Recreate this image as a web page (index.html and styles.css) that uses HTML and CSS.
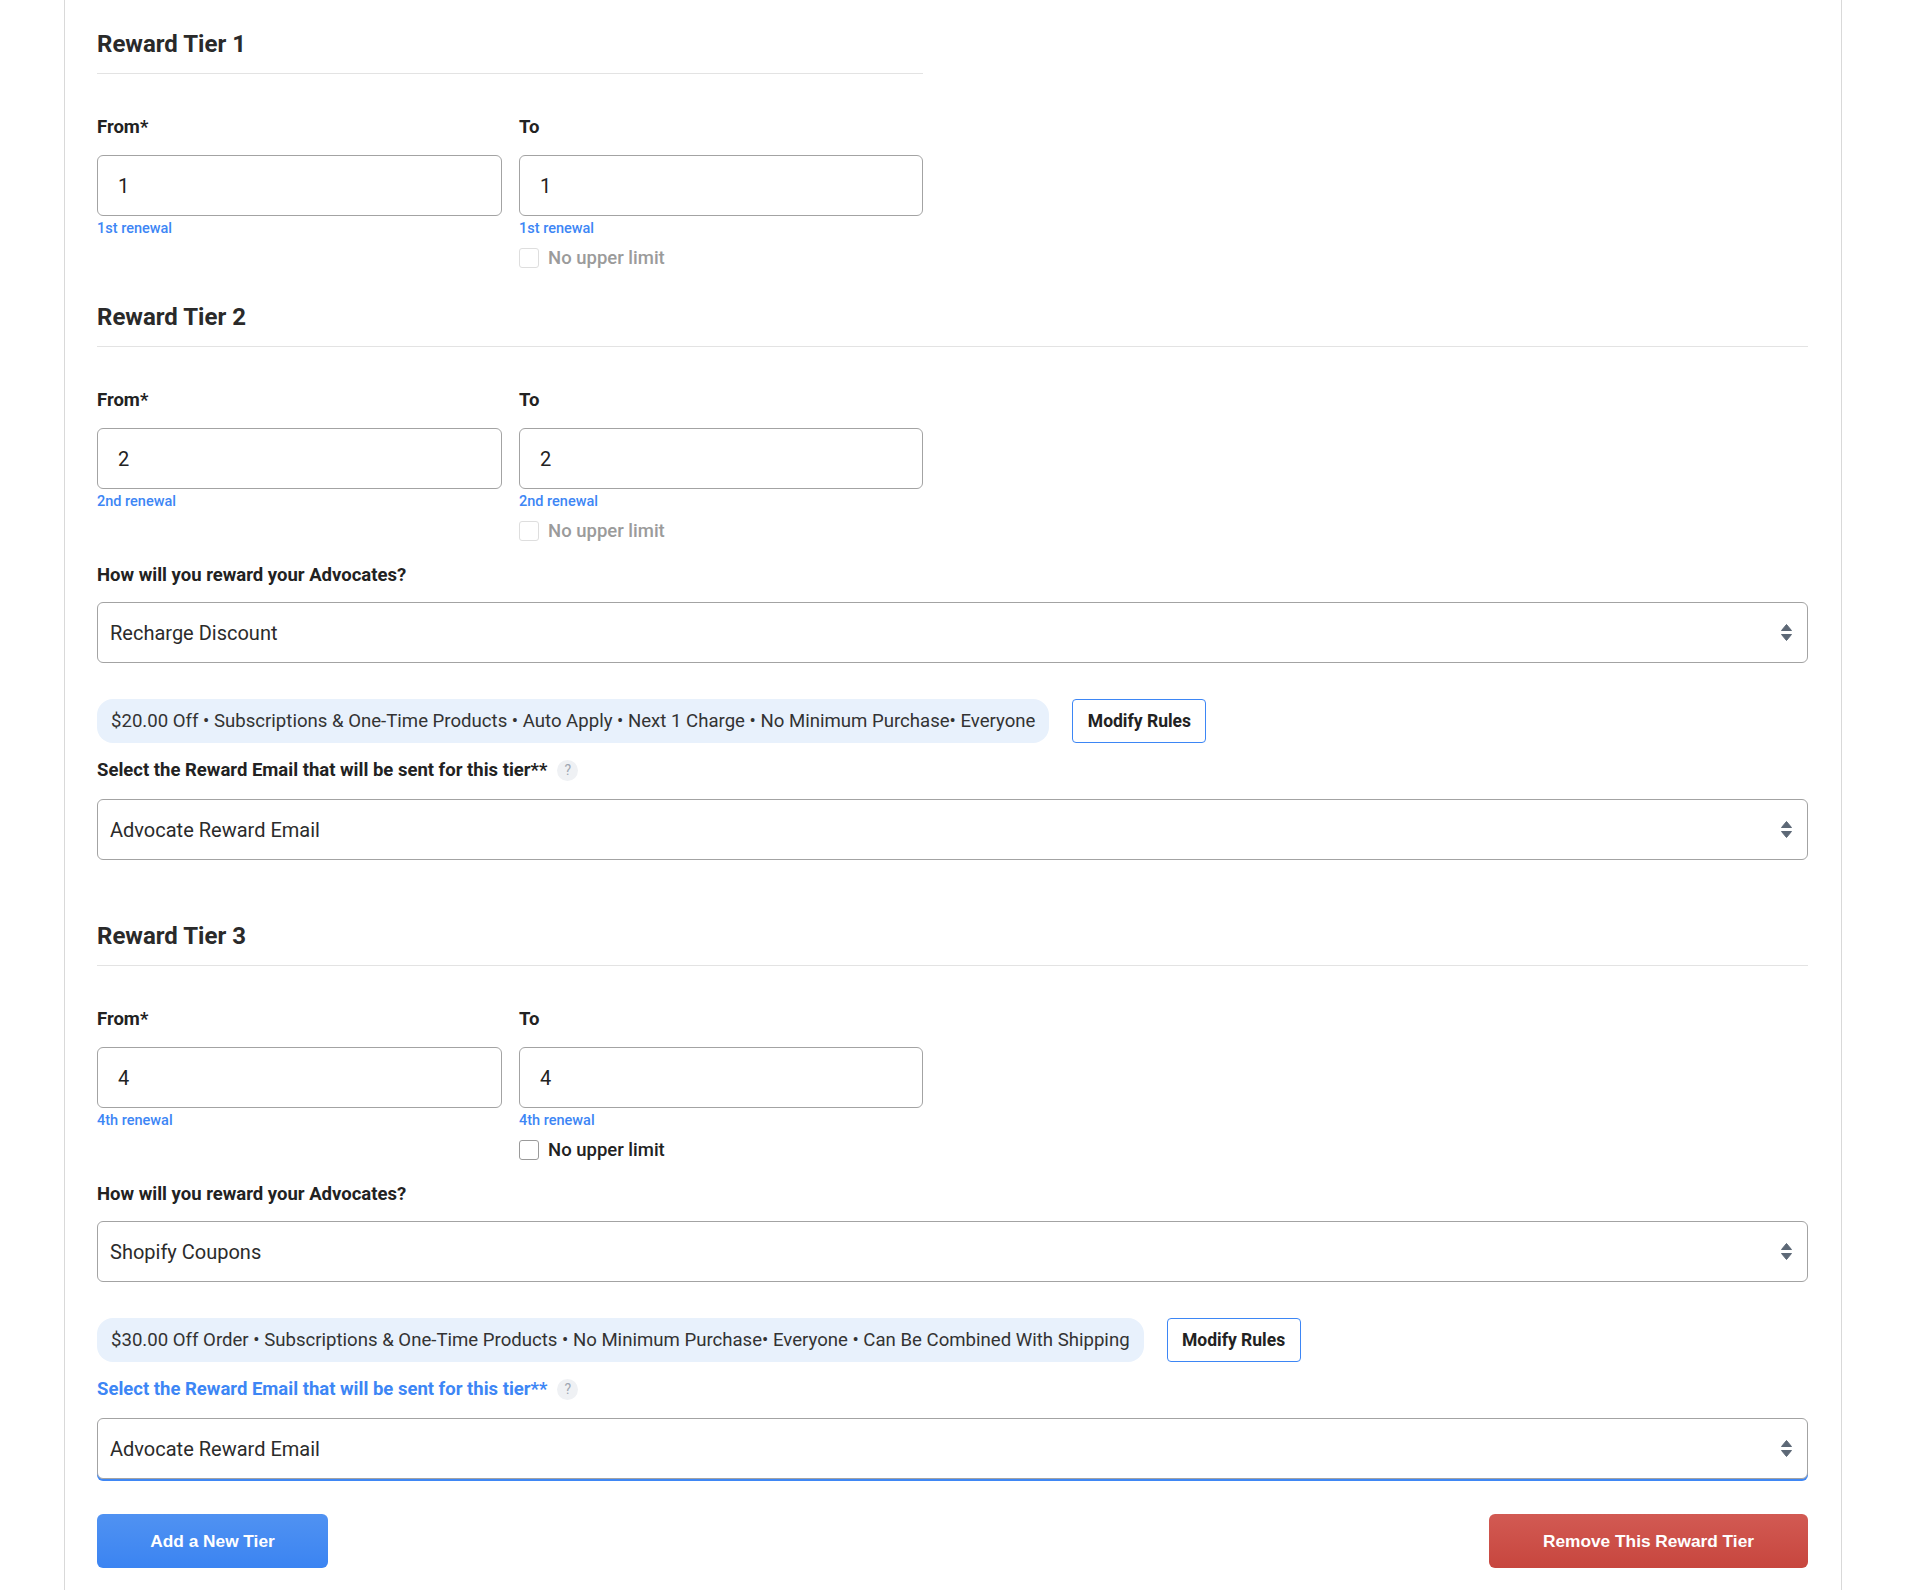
FILE: index.html
```html
<!DOCTYPE html>
<html lang="en">
<head>
<meta charset="utf-8">
<title>Reward Tiers</title>
<link rel="stylesheet" href="styles.css">
</head>
<body>
<div class="panel">

  <section class="tier tier-first">
    <div class="tier-head"><h2>Reward Tier 1</h2></div>
    <div class="range">
      <div class="field">
        <div class="lbl">From*</div>
        <input class="num" type="text" value="1">
        <div class="hint">1st renewal</div>
      </div>
      <div class="field">
        <div class="lbl">To</div>
        <input class="num" type="text" value="1">
        <div class="hint">1st renewal</div>
        <div class="check is-disabled"><span class="box"></span><span class="check-text">No upper limit</span></div>
      </div>
    </div>
  </section>

  <section class="tier tier-second">
    <div class="tier-head"><h2>Reward Tier 2</h2></div>
    <div class="range">
      <div class="field">
        <div class="lbl">From*</div>
        <input class="num" type="text" value="2">
        <div class="hint">2nd renewal</div>
      </div>
      <div class="field">
        <div class="lbl">To</div>
        <input class="num" type="text" value="2">
        <div class="hint">2nd renewal</div>
        <div class="check is-disabled"><span class="box"></span><span class="check-text">No upper limit</span></div>
      </div>
    </div>
    <div class="lbl lbl-method">How will you reward your Advocates?</div>
    <div class="select select-method">
      <span>Recharge Discount</span>
      <svg class="arrows" width="11" height="17" viewBox="0 0 11 17"><path d="M5.5 0.5 L10.5 6.5 H0.5 Z" fill="#5d6876" stroke="#5d6876" stroke-linejoin="round"/><path d="M5.5 16.5 L10.5 10.5 H0.5 Z" fill="#5d6876" stroke="#5d6876" stroke-linejoin="round"/></svg>
    </div>
    <div class="rules">
      <div class="pill">$20.00 Off • Subscriptions &amp; One-Time Products • Auto Apply • Next 1 Charge • No Minimum Purchase• Everyone</div>
      <button class="modify" type="button">Modify Rules</button>
    </div>
    <div class="lbl lbl-email">Select the Reward Email that will be sent for this tier** <span class="help">?</span></div>
    <div class="select select-email">
      <span>Advocate Reward Email</span>
      <svg class="arrows" width="11" height="17" viewBox="0 0 11 17"><path d="M5.5 0.5 L10.5 6.5 H0.5 Z" fill="#5d6876" stroke="#5d6876" stroke-linejoin="round"/><path d="M5.5 16.5 L10.5 10.5 H0.5 Z" fill="#5d6876" stroke="#5d6876" stroke-linejoin="round"/></svg>
    </div>
  </section>

  <section class="tier tier-third">
    <div class="tier-head"><h2>Reward Tier 3</h2></div>
    <div class="range">
      <div class="field">
        <div class="lbl">From*</div>
        <input class="num" type="text" value="4">
        <div class="hint">4th renewal</div>
      </div>
      <div class="field">
        <div class="lbl">To</div>
        <input class="num" type="text" value="4">
        <div class="hint">4th renewal</div>
        <div class="check"><span class="box"></span><span class="check-text">No upper limit</span></div>
      </div>
    </div>
    <div class="lbl lbl-method">How will you reward your Advocates?</div>
    <div class="select select-method">
      <span>Shopify Coupons</span>
      <svg class="arrows" width="11" height="17" viewBox="0 0 11 17"><path d="M5.5 0.5 L10.5 6.5 H0.5 Z" fill="#5d6876" stroke="#5d6876" stroke-linejoin="round"/><path d="M5.5 16.5 L10.5 10.5 H0.5 Z" fill="#5d6876" stroke="#5d6876" stroke-linejoin="round"/></svg>
    </div>
    <div class="rules">
      <div class="pill">$30.00 Off Order • Subscriptions &amp; One-Time Products • No Minimum Purchase• Everyone • Can Be Combined With Shipping</div>
      <button class="modify" type="button">Modify Rules</button>
    </div>
    <div class="lbl lbl-email is-active">Select the Reward Email that will be sent for this tier** <span class="help">?</span></div>
    <div class="select select-email is-focused">
      <span>Advocate Reward Email</span>
      <svg class="arrows" width="11" height="17" viewBox="0 0 11 17"><path d="M5.5 0.5 L10.5 6.5 H0.5 Z" fill="#5d6876" stroke="#5d6876" stroke-linejoin="round"/><path d="M5.5 16.5 L10.5 10.5 H0.5 Z" fill="#5d6876" stroke="#5d6876" stroke-linejoin="round"/></svg>
    </div>
    <div class="actions">
      <button class="btn btn-add" type="button">Add a New Tier</button>
      <button class="btn btn-remove" type="button">Remove This Reward Tier</button>
    </div>
  </section>

</div>
</body>
</html>
```

FILE: styles.css
```css
* {
  box-sizing: border-box;
}

html, body {
  margin: 0;
  padding: 0;
  background: #ffffff;
}

body {
  font-family: Roboto, "Liberation Sans", Arial, sans-serif;
  color: #222222;
}

.panel {
  margin-left: 64px;
  width: 1778px;
  min-height: 1590px;
  padding: 31px 33px 24px 32px;
  border-left: 1px solid #d9d9d9;
  border-right: 1px solid #d9d9d9;
}

.tier-first {
  width: 826px;
}

.tier-second {
  margin-top: 35px;
}

.tier-third {
  margin-top: 63px;
}

.tier-head {
  padding-bottom: 16px;
  border-bottom: 1px solid #e3e3e3;
}

.tier-head h2 {
  margin: 0;
  font-size: 24px;
  line-height: 26px;
  font-weight: 700;
  color: #2a2a2a;
}

.range {
  display: grid;
  grid-template-columns: 405px 404px;
  column-gap: 17px;
  margin-top: 43px;
}

.field {
  display: flex;
  flex-direction: column;
}

.lbl {
  font-size: 18.5px;
  line-height: 20px;
  font-weight: 700;
  color: #222222;
}

.num {
  margin-top: 18px;
  height: 61px;
  width: 100%;
  padding: 0 20px;
  border: 1px solid #a3a3a3;
  border-radius: 6px;
  font-family: Roboto, sans-serif;
  font-size: 20px;
  color: #222222;
  background: #ffffff;
  outline: none;
}

.hint {
  margin-top: 5px;
  font-size: 14.5px;
  line-height: 16px;
  font-weight: 500;
  color: #3d86f5;
}

.check {
  margin-top: 10px;
  height: 22px;
  display: flex;
  align-items: center;
  gap: 9px;
}

.check .box {
  width: 20px;
  height: 20px;
  border: 1px solid #9a9a9a;
  border-radius: 3px;
  background: #ffffff;
}

.check-text {
  font-size: 18.5px;
  line-height: 22px;
  font-weight: 500;
  color: #222222;
}

.check.is-disabled .box {
  border-color: #dedede;
}

.check.is-disabled .check-text {
  color: #9b9b9b;
}

.lbl-method {
  margin-top: 23px;
}

.select {
  height: 61px;
  display: flex;
  align-items: center;
  justify-content: space-between;
  padding: 0 15px 0 12px;
  border: 1px solid #a3a3a3;
  border-radius: 6px;
  font-size: 20px;
  color: #2b2b2b;
  background: #ffffff;
}

.select-method {
  margin-top: 17px;
}

.select-email {
  margin-top: 18px;
}

.select.is-focused {
  box-shadow: 0 2px 0 0 #3f87f5;
}

.arrows {
  display: block;
}

.rules {
  margin-top: 36px;
  display: flex;
  align-items: center;
  gap: 23px;
}

.pill {
  height: 44px;
  display: flex;
  align-items: center;
  padding: 0 14px;
  border-radius: 16px;
  background: #e8f1fc;
  font-size: 18.6px;
  color: #333333;
  white-space: nowrap;
}

.modify {
  height: 44px;
  width: 134px;
  padding: 0;
  border: 1px solid #3d86f5;
  border-radius: 4px;
  background: #ffffff;
  font-family: Roboto, sans-serif;
  font-size: 17.5px;
  font-weight: 700;
  color: #222222;
}

.lbl-email {
  margin-top: 16px;
  height: 22px;
  display: flex;
  align-items: center;
  gap: 10px;
}

.lbl-email.is-active {
  color: #3d86f5;
}

.help {
  width: 21px;
  height: 21px;
  border-radius: 50%;
  background: #eff1f4;
  color: #9ea6b2;
  font-size: 14px;
  font-weight: 400;
  display: inline-flex;
  align-items: center;
  justify-content: center;
}

.actions {
  margin-top: 35px;
  display: flex;
  justify-content: space-between;
}

.btn {
  height: 54px;
  padding: 0;
  border: none;
  border-radius: 6px;
  font-family: "Liberation Sans", Arial, sans-serif;
  font-size: 17.3px;
  font-weight: 700;
  color: #ffffff;
}

.btn-add {
  width: 231px;
  background: linear-gradient(#5092f2, #3b84f2);
}

.btn-remove {
  width: 319px;
  background: linear-gradient(#d25a53, #c7463e);
}
```
